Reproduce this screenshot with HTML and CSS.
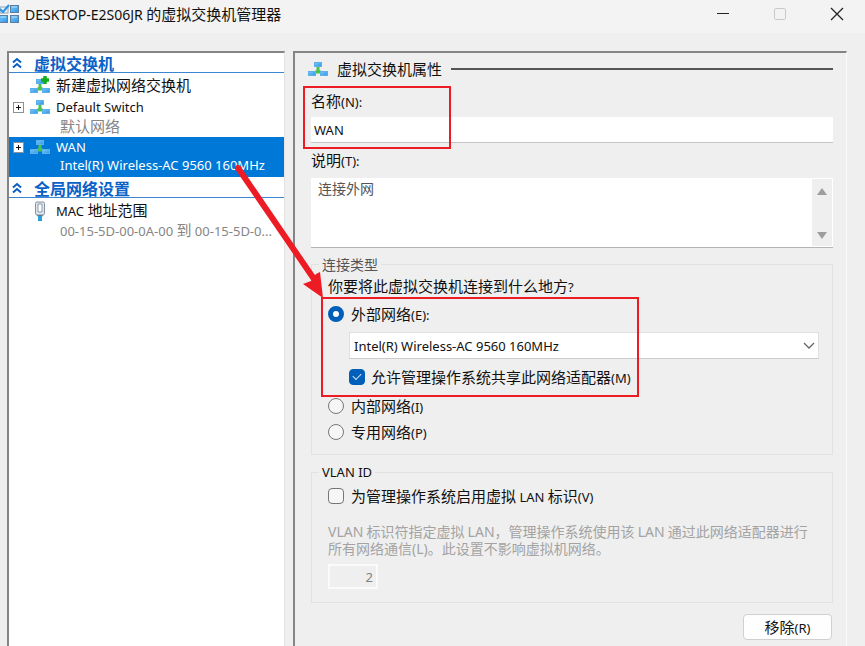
FILE: index.html
```html
<!DOCTYPE html>
<html lang="zh-CN">
<head>
<meta charset="utf-8">
<title>DESKTOP-E2S06JR 的虚拟交换机管理器</title>
<link rel="stylesheet" href="styles.css">
</head>
<body>
<svg class="defs" aria-hidden="true">
  <defs>
    <linearGradient id="blue" x1="0" y1="0" x2="1" y2="1">
      <stop offset="0" stop-color="#7cc8f8"/><stop offset="1" stop-color="#2b96e8"/>
    </linearGradient>
    <symbol id="switch" viewBox="0 0 20 14">
      <path d="M8.500 4h3v4l2.500 1.500v2H6v-2L8.500 8z" fill="#4cc24c"/>
      <rect x="6.500" y="0.500" width="7" height="4" fill="url(#blue)" stroke="#5db0ea"/>
      <rect x="0.500" y="9.500" width="7" height="4" fill="url(#blue)" stroke="#5db0ea"/>
      <rect x="12.500" y="9.500" width="7" height="4" fill="url(#blue)" stroke="#5db0ea"/>
    </symbol>
    <symbol id="chevrons" viewBox="0 0 10 12">
      <path d="M1 5.500L5 2l4 3.500M1 10.500L5 7l4 3.500" fill="none" stroke="#0a5fc4" stroke-width="2"/>
    </symbol>
  </defs>
</svg>
<header class="titlebar">
  <svg class="app-icon" viewBox="0 0 20 20" aria-hidden="true">
    <rect x="0" y="3" width="8" height="6" fill="#e8f3fb" stroke="#8aa6bb"/>
    <path d="M0 5l3 3 6-7" fill="none" stroke="#2d8fe0" stroke-width="2"/>
    <g fill="url(#blue)" stroke="#5b7f9c"><rect x="10.500" y="1.500" width="8" height="7"/><rect x="10.500" y="11.500" width="8" height="7"/><rect x="-0.500" y="11.500" width="8" height="7"/></g>
    <path d="M12 3h5M12 13h5M1 13h5" stroke="#b5e0fb"/>
  </svg>
  <h1><span class="latin">DESKTOP-E2S06JR</span> 的虚拟交换机管理器</h1>
  <div class="window-buttons">
    <button aria-label="最小化"><svg viewBox="0 0 14 14"><path d="M1 6.500h12" stroke="#222"/></svg></button>
    <button aria-label="最大化" disabled><svg viewBox="0 0 14 14"><rect x="1.500" y="1.500" width="11" height="11" rx="1" fill="none" stroke="#c8c8c8"/></svg></button>
    <button aria-label="关闭"><svg viewBox="0 0 14 14"><path d="M1 1l12 12M13 1L1 13" stroke="#222" stroke-width="1.300"/></svg></button>
  </div>
</header>
<main>
  <nav class="tree">
    <h2><svg class="chevrons"><use href="#chevrons"/></svg>虚拟交换机</h2>
    <div class="node new">
      <svg class="node-icon tall" viewBox="0 0 20 18"><use href="#switch" y="3" width="20" height="14"/><path d="M15 0v8M11 4h8" stroke="#12ad1c" stroke-width="3.500"/></svg>
      <span>新建虚拟网络交换机</span>
    </div>
    <div class="node">
      <button class="expander" aria-label="展开"></button>
      <svg class="node-icon"><use href="#switch"/></svg>
      <span class="latin">Default Switch</span>
      <small>默认网络</small>
    </div>
    <div class="node selected">
      <button class="expander" aria-label="展开"></button>
      <svg class="node-icon"><use href="#switch"/></svg>
      <span class="latin">WAN</span>
      <small class="latin">Intel(R) Wireless-AC 9560 160MHz</small>
    </div>
    <h2><svg class="chevrons"><use href="#chevrons"/></svg>全局网络设置</h2>
    <div class="node mac">
      <svg class="node-icon nic" viewBox="0 0 20 20"><rect x="5.500" y="1" width="9" height="13" rx="1.500" fill="#dfe6ed" stroke="#8292a2"/><path d="M8 3v8h4V3z" fill="#fff" stroke="#8b9bab"/><path d="M7 14h6l-1 2H8z" fill="#637b90"/><path d="M10 15v5" stroke="#29a2dc" stroke-width="4"/></svg>
      <span><span class="latin">MAC</span> 地址范围</span>
      <small><span class="latin">00-15-5D-00-0A-00</span> 到 <span class="latin">00-15-5D-0...</span></small>
    </div>
  </nav>
  <form class="panel">
    <h2 class="panel-title"><svg class="node-icon"><use href="#switch"/></svg>虚拟交换机属性</h2>
    <div class="name-field">
      <label for="name">名称<span class="latin">(N):</span></label>
      <input id="name" class="latin" type="text" value="WAN">
    </div>
    <label for="notes">说明<span class="latin">(T):</span></label>
    <div class="notes">
      <textarea id="notes">连接外网</textarea>
      <div class="scrollbar" aria-hidden="true">
        <svg viewBox="0 0 12 9"><path d="M6 1l5 7H1z"/></svg>
        <svg viewBox="0 0 12 9"><path d="M6 8L1 1h10z"/></svg>
      </div>
    </div>
    <fieldset class="connection">
      <legend>连接类型</legend>
      <p>你要将此虚拟交换机连接到什么地方<span class="latin">?</span></p>
      <div class="external">
        <label class="choice"><input type="radio" name="net" checked><span>外部网络<span class="latin">(E):</span></span></label>
        <div class="select">
          <select class="latin" aria-label="网络适配器"><option>Intel(R) Wireless-AC 9560 160MHz</option></select>
          <svg viewBox="0 0 12 8" aria-hidden="true"><path d="M1 1l5 5 5-5" fill="none" stroke="#666" stroke-width="1.300"/></svg>
        </div>
        <label class="choice share"><input type="checkbox" checked><span>允许管理操作系统共享此网络适配器<span class="latin">(M)</span></span></label>
      </div>
      <label class="choice"><input type="radio" name="net"><span>内部网络<span class="latin">(I)</span></span></label>
      <label class="choice"><input type="radio" name="net"><span>专用网络<span class="latin">(P)</span></span></label>
    </fieldset>
    <fieldset class="vlan">
      <legend class="latin">VLAN ID</legend>
      <label class="choice"><input type="checkbox"><span>为管理操作系统启用虚拟 <span class="latin">LAN</span> 标识<span class="latin">(V)</span></span></label>
      <label class="hint" for="vlan"><span class="latin">VLAN</span> 标识符指定虚拟 <span class="latin">LAN</span>，管理操作系统使用该 <span class="latin">LAN</span> 通过此网络适配器进行<br>所有网络通信<span class="latin">(L)</span>。此设置不影响虚拟机网络。</label>
      <input id="vlan" class="latin" type="text" value="2" disabled>
    </fieldset>
    <button class="remove" type="button">移除<span class="latin">(R)</span></button>
  </form>
</main>
<svg class="arrow" viewBox="0 0 90 134" aria-hidden="true"><path d="M3 3L79 114" stroke="#ed1c24" stroke-width="6" stroke-linecap="round"/><path d="M88 133L68 119l8-3 5-7 4-2z" fill="#ed1c24"/></svg>
</body>
</html>
```

FILE: styles.css
```css
*, *::before, *::after { box-sizing: border-box; }

body {
  margin: 0;
  height: 100vh;
  display: flex;
  flex-direction: column;
  overflow: hidden;
  position: relative;
  background: #efefef;
  color: #111;
  font: 15px/20px "Noto Sans CJK SC", sans-serif;
}

h1, h2, p { margin: 0; font-size: 15px; font-weight: 400; }
button, input, select, textarea { font: inherit; color: inherit; margin: 0; }
.latin { font-family: "Noto Sans", sans-serif; font-size: 13px; }
.defs { position: absolute; width: 0; height: 0; }

.titlebar {
  display: flex;
  align-items: center;
  flex: none;
  height: 33px;
  padding-bottom: 5px;
  background: #f3f3f3;
}
.app-icon { width: 20px; height: 20px; margin-right: 5px; }
.titlebar h1 { flex: 1; }
.titlebar h1 .latin { font-size: 14px; }
.window-buttons { display: flex; }
.window-buttons button {
  width: 57px;
  height: 28px;
  padding: 0;
  border: 0;
  background: none;
}
.window-buttons svg { display: block; width: 14px; height: 14px; margin: auto; }

main {
  flex: 1;
  min-height: 0;
  display: grid;
  grid-template-columns: 278px 1fr;
  gap: 8px;
  padding: 18px 18px 0 7px;
}

.tree {
  overflow: hidden;
  background: #fff;
  border: 2px solid #858585;
  border-width: 2px 1px 0 2px;
  border-right-color: #e2e2e2;
}
.tree h2 {
  display: flex;
  align-items: center;
  gap: 12px;
  height: 20px;
  padding-left: 3px;
  border-bottom: 1px solid #3a86d0;
  color: #0a62c8;
  font-size: 16px;
  font-weight: 700;
}
.chevrons { width: 10px; height: 12px; }

.node {
  display: grid;
  grid-template-columns: 11px 20px 1fr;
  column-gap: 6px;
  align-items: center;
  padding: 0 0 3px 4px;
  line-height: 20px;
  white-space: nowrap;
}
.node > span { grid-column: 3; }
.node small {
  grid-column: 3;
  padding-left: 4px;
  color: #858585;
  font-size: 15px;
  line-height: 17px;
}
.node small.latin { font-size: 13px; }
.node.new { padding: 2px 0 2px 4px; }
.node.mac { padding-top: 2px; }
.node-icon { grid-column: 2; width: 20px; height: 14px; }
.node-icon.tall { height: 18px; }
.node-icon.nic { height: 20px; }
.node.selected { margin-bottom: 1px; background: #0078d7; color: #fff; }
.selected small { color: #fff; }
.expander {
  width: 11px;
  height: 11px;
  padding: 0;
  border: 1px solid #8a9199;
  background:
    linear-gradient(#111, #111) center / 5px 1px no-repeat,
    linear-gradient(#111, #111) center / 1px 5px no-repeat,
    #fff;
}

.panel {
  display: flex;
  flex-direction: column;
  overflow: hidden;
  padding: 6px 13px 0 16px;
  border: 2px solid #858585;
  border-width: 2px 1px 0 2px;
  border-right-color: #fafafa;
}
.panel-title { display: flex; align-items: center; height: 20px; }
.panel-title .node-icon { margin: 0 9px 0 -3px; }
.panel-title::after { content: ""; flex: 1; height: 2px; margin-left: 9px; background: #555; }

.name-field { position: relative; padding-top: 12px; margin-bottom: 7px; }
.name-field::after {
  content: "";
  position: absolute;
  inset: 7px auto -6px -8px;
  width: 148px;
  border: 2px solid #ed1c24;
  pointer-events: none;
}
.name-field label { display: block; }
.name-field input {
  display: block;
  width: 100%;
  height: 26px;
  margin-top: 5px;
  padding: 0 3px;
  border: 0;
  border-bottom: 1px solid #c4c4c4;
  background: #fff;
}
.notes {
  display: flex;
  flex: none;
  height: 70px;
  margin-top: 7px;
  padding: 1px;
  border-bottom: 1px solid #b5b5b5;
  background: #fff;
}
.notes textarea {
  flex: 1;
  padding: 0 6px;
  border: 0;
  resize: none;
  overflow: hidden;
  background: none;
  color: #555;
  font-size: 14px;
  line-height: 18px;
}
.scrollbar {
  display: flex;
  flex-direction: column;
  justify-content: space-between;
  align-items: center;
  width: 20px;
  padding: 8px 0 6px;
  background: #efefef;
}
.scrollbar svg { width: 12px; height: 9px; fill: #9d9d9d; }

fieldset {
  min-width: 0;
  margin: 7px 0 0;
  padding: 2px 13px 0 16px;
  border: 1px solid #e2e2e2;
}
legend { margin-left: -9px; padding: 0 3px; line-height: 20px; }
.connection legend { color: #555; font-size: 14px; }
.connection { margin-top: 6px; padding-bottom: 9px; }

.external { position: relative; margin-bottom: -4px; padding: 4px 0 7px; }
.external::after {
  content: "";
  position: absolute;
  inset: 0 auto 0 -7px;
  width: 318px;
  border: 2px solid #ed1c24;
  pointer-events: none;
}
.choice { display: flex; align-items: center; gap: 7px; height: 26px; }
.choice input {
  appearance: none;
  width: 16px;
  height: 16px;
  border: 1px solid #777;
  border-radius: 4px;
  background: #f6f6f6;
}
.choice input[type="radio"] { border-radius: 50%; }
.choice input[type="radio"]:checked { border: 5px solid #005fb8; background: #fff; }
.choice input[type="checkbox"]:checked { position: relative; border-color: #005fb8; background: #005fb8; }
.choice input[type="checkbox"]:checked::after {
  content: "";
  position: absolute;
  left: 3px;
  top: 3px;
  width: 8px;
  height: 5px;
  border: solid #d5e8f8;
  border-width: 0 0 1px 1px;
  transform: rotate(-45deg);
}
.select { position: relative; margin: 5px 0 5px 21px; }
.select select {
  display: block;
  appearance: none;
  width: 100%;
  height: 27px;
  padding: 0 4px;
  border: 1px solid #e0e0e0;
  border-bottom-color: #ccc;
  border-radius: 0;
  background: #fff;
}
.select svg { position: absolute; right: 4px; top: 10px; width: 12px; height: 8px; }
.share { margin-left: 21px; gap: 6px; }

.vlan { padding-top: 1px; padding-bottom: 13px; }
.hint { display: block; margin-top: 14px; color: #a3a3a3; font-size: 14px; line-height: 17px; white-space: nowrap; }
.hint .latin { font-size: 14px; }
.vlan > input {
  display: block;
  width: 50px;
  height: 25px;
  margin-top: 7px;
  padding: 0 3px;
  border: 2px solid #fafafa;
  background: #efefef;
  color: #808080;
  text-align: right;
}
.remove {
  align-self: flex-end;
  flex: none;
  width: 89px;
  height: 26px;
  margin: 11px 1px 0 0;
  padding: 0;
  border: 1px solid #d0d0d0;
  border-radius: 4px;
  background: #fefefe;
  line-height: 20px;
}

.arrow { position: absolute; left: 235px; top: 165px; width: 90px; height: 134px; fill: none; pointer-events: none; }
```
